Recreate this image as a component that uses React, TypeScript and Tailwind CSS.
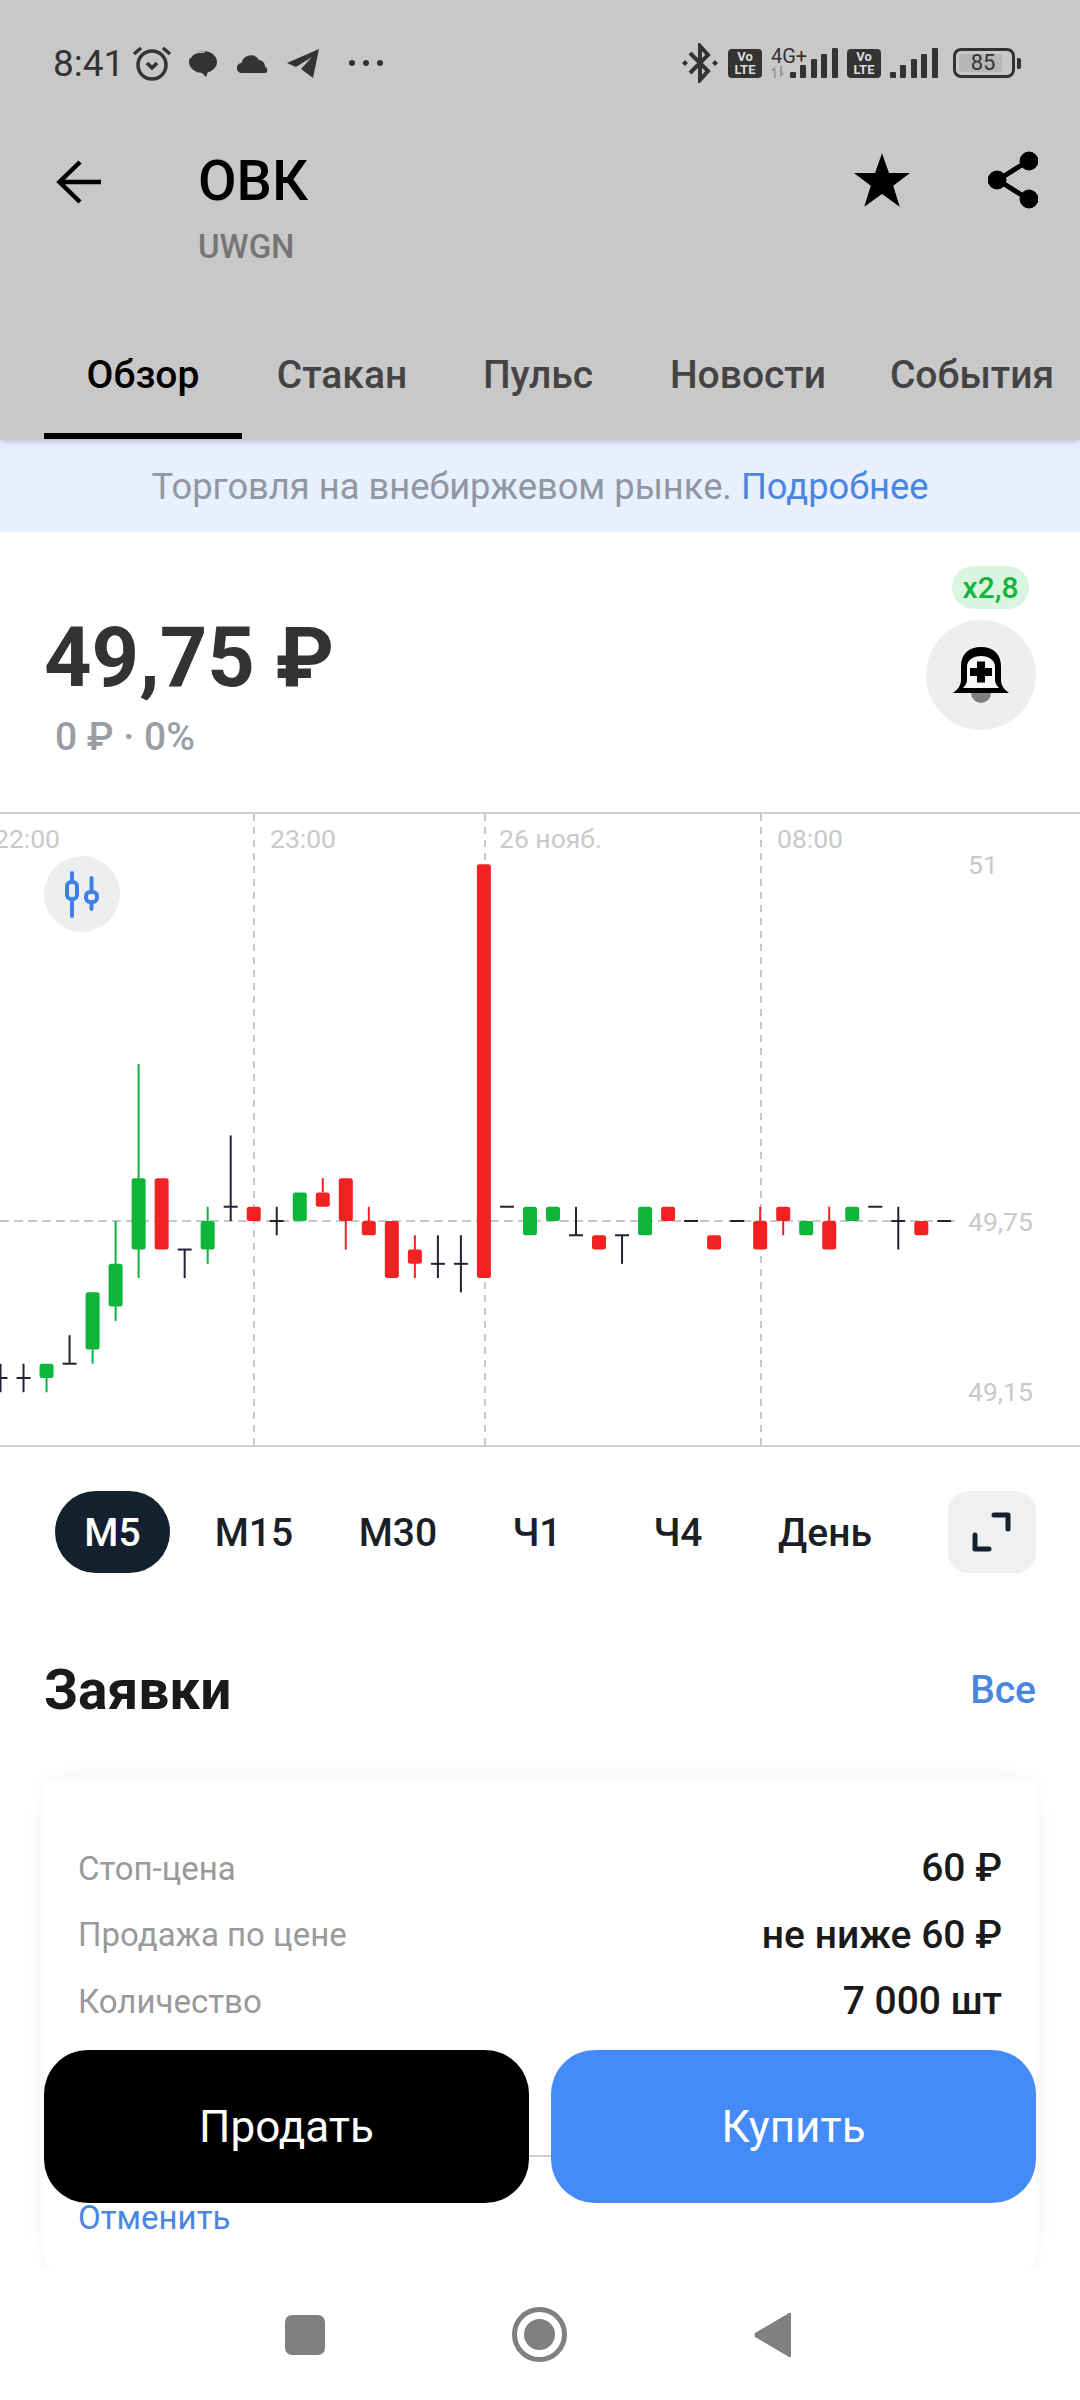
type Candle = { c: 'g' | 'r' | 'k'; t: number; b: number; h?: number; l?: number };

const candles: Candle[] = [
  { c: 'k', t: 11, b: 11, h: 10, l: 12 },
  { c: 'k', t: 11, b: 11, h: 10, l: 12 },
  { c: 'g', t: 10, b: 11, l: 12 },
  { c: 'k', t: 10, b: 10, h: 8, l: 10 },
  { c: 'g', t: 5, b: 9, l: 10 },
  { c: 'g', t: 3, b: 6, h: 0, l: 7 },
  { c: 'g', t: -3, b: 2, h: -11, l: 4 },
  { c: 'r', t: -3, b: 2 },
  { c: 'k', t: 2, b: 2, h: 2, l: 4 },
  { c: 'g', t: 0, b: 2, h: -1, l: 3 },
  { c: 'k', t: -1, b: -1, h: -6, l: 0 },
  { c: 'r', t: -1, b: 0 },
  { c: 'k', t: 0, b: 0, h: -1, l: 1 },
  { c: 'g', t: -2, b: 0 },
  { c: 'r', t: -2, b: -1, h: -3 },
  { c: 'r', t: -3, b: 0, l: 2 },
  { c: 'r', t: 0, b: 1, h: -1 },
  { c: 'r', t: 0, b: 4 },
  { c: 'r', t: 2, b: 3, h: 1, l: 4 },
  { c: 'k', t: 3, b: 3, h: 1, l: 4 },
  { c: 'k', t: 3, b: 3, h: 1, l: 5 },
  { c: 'r', t: -25, b: 4 },
  { c: 'k', t: -1, b: -1 },
  { c: 'g', t: -1, b: 1 },
  { c: 'g', t: -1, b: 0 },
  { c: 'k', t: 1, b: 1, h: -1, l: 1 },
  { c: 'r', t: 1, b: 2 },
  { c: 'k', t: 1, b: 1, h: 1, l: 3 },
  { c: 'g', t: -1, b: 1 },
  { c: 'r', t: -1, b: 0 },
  { c: 'k', t: 0, b: 0 },
  { c: 'r', t: 1, b: 2 },
  { c: 'k', t: 0, b: 0 },
  { c: 'r', t: 0, b: 2, h: -1 },
  { c: 'r', t: -1, b: 0, l: 1 },
  { c: 'g', t: 0, b: 1 },
  { c: 'r', t: 0, b: 2, h: -1 },
  { c: 'g', t: -1, b: 0 },
  { c: 'k', t: -1, b: -1 },
  { c: 'k', t: 0, b: 0, h: -1, l: 2 },
  { c: 'r', t: 0, b: 1 },
  { c: 'k', t: 0, b: 0 },
];

const colors = { g: '#0db53a', r: '#f22222', k: '#1e2430' };
const zero = 407;
const y = (n: number) => zero + n * 14.27;
const x = (i: number) => 0.5 + i * 23.02;

const tabs = [
  { label: 'Обзор', w: 'w-[198px]', active: true },
  { label: 'Стакан', w: 'w-[200px]' },
  { label: 'Пульс', w: 'w-[192px]' },
  { label: 'Новости', w: 'w-[228px]' },
  { label: 'События', w: 'w-[220px]' },
];

const periods = [
  { label: 'М5', w: 'w-[115px]', active: true },
  { label: 'М15', w: 'w-[168px]' },
  { label: 'М30', w: 'w-[120px]' },
  { label: 'Ч1', w: 'w-[158px]' },
  { label: 'Ч4', w: 'w-[124px]' },
  { label: 'День', w: 'w-[170px]' },
];

const rows = [
  { label: 'Стоп-цена', value: '60 ₽' },
  { label: 'Продажа по цене', value: 'не ниже 60 ₽' },
  { label: 'Количество', value: '7 000 шт' },
];

const Bars = () => (
  <svg width="48" height="30" viewBox="0 0 48 30" fill="#333">
    <rect x="0" y="24" width="6" height="6" rx="1" />
    <rect x="10" y="17" width="6" height="13" rx="1" />
    <rect x="21" y="11" width="6" height="19" rx="1" />
    <rect x="31" y="6" width="6" height="24" rx="1" />
    <rect x="42" y="0" width="6" height="30" rx="1" />
  </svg>
);

const VoLte = () => (
  <div className="flex h-[29px] w-[34px] flex-col items-center justify-center rounded-[4px] bg-[#333] text-[13px] leading-[13px] font-bold text-[#dcdcdc]">
    <span>Vo</span>
    <span>LTE</span>
  </div>
);

const StatusBar = () => (
  <div className="flex h-[126px] items-center justify-between pr-[59px] pl-[53px] text-[#333]">
    <div className="flex items-center">
      <span className="w-[79px] text-[37px] leading-none">8:41</span>
      <svg width="40" height="36" viewBox="0 0 40 36" fill="none" stroke="#333">
        <circle cx="20" cy="20" r="14" strokeWidth="3.5" />
        <path d="M2 9 9 3M38 9l-7-6" strokeWidth="3.5" />
        <path d="M15 18l5 5 5-5" strokeWidth="3.5" />
      </svg>
      <svg className="ml-[17px]" width="28" height="28" viewBox="0 0 28 28">
        <ellipse cx="14" cy="13" rx="14" ry="11" fill="#333" />
        <path d="M9 20h11l-3 8z" fill="#333" />
        <path d="M1 9c3-6 8-6 15-6" fill="none" stroke="#c8c8c8" strokeWidth="1.5" />
      </svg>
      <svg className="ml-[20px]" width="32" height="19" viewBox="0 0 32 19" fill="#333">
        <path d="M5 19a5 5 0 0 1-.5-10A9.500 9.500 0 0 1 22 6a6.500 6.500 0 0 1 6 6.500 4 4 0 0 1 1 6.500z" />
      </svg>
      <svg className="ml-[18px]" width="32" height="29" viewBox="0 0 32 29" fill="#333">
        <path d="M32 0 0 14l9 4 16-10-11 12 12 9z" />
      </svg>
      <div className="ml-[30px] flex gap-[8px]">
        <div className="h-[6px] w-[6px] rounded-full bg-[#333]" />
        <div className="h-[6px] w-[6px] rounded-full bg-[#333]" />
        <div className="h-[6px] w-[6px] rounded-full bg-[#333]" />
      </div>
    </div>
    <div className="flex items-center">
      <svg width="36" height="40" viewBox="0 0 36 40" fill="none" stroke="#333" strokeWidth="4">
        <path d="M8 10l18 18-8 9V3l8 9L8 30" />
        <path d="M0 20l3-3 3 3-3 3zM30 20l3-3 3 3-3 3z" fill="#333" strokeWidth="0" />
      </svg>
      <div className="ml-[10px]">
        <VoLte />
      </div>
      <div className="relative ml-[9px] h-[30px] w-[67px]">
        <span className="absolute -top-[2px] left-0 text-[20px] leading-[20px]">4G+</span>
        <svg className="absolute bottom-0 left-0" width="18" height="12" viewBox="0 0 18 12" fill="#999">
          <path d="M0 5l4-5 1 12H3V5zM9 0h2v7h2l-4 5z" />
        </svg>
        <div className="absolute right-0 bottom-0">
          <Bars />
        </div>
      </div>
      <div className="ml-[9px]">
        <VoLte />
      </div>
      <div className="ml-[9px]">
        <Bars />
      </div>
      <div className="ml-[15px] flex items-center">
        <div className="relative flex h-[30px] w-[62px] items-center justify-center rounded-[8px] border-[3px] border-[#333]">
          <div className="absolute top-[3px] bottom-[3px] left-[3px] w-[43px] rounded-[2px] bg-[#b6b6b6]" />
          <span className="relative mr-[2px] text-[22px] leading-none">85</span>
        </div>
        <div className="ml-[2px] h-[11px] w-[4px] rounded-r-[2px] bg-[#333]" />
      </div>
    </div>
  </div>
);

const Header = () => (
  <div className="relative z-10 h-[440px] bg-[#c8c8c8] shadow-[0_2px_6px_rgba(110,130,170,0.35)]">
    <StatusBar />
    <div className="mt-[25px] flex justify-between pr-[42px] pl-[54px]">
      <div className="flex">
        <svg className="mt-[9px]" width="47" height="44" viewBox="0 0 47 44" fill="none" stroke="#000" strokeWidth="4.500">
          <path d="M47 22H6M26 2 5.500 22 26 42" />
        </svg>
        <div className="ml-[97px]">
          <div className="text-[56px] leading-[60px] font-medium text-black">ОВК</div>
          <div className="mt-[16px] text-[33px] leading-[40px] font-medium text-[#757575]">UWGN</div>
        </div>
      </div>
      <div className="-mt-px flex items-start">
        <svg className="mt-[3px]" width="56" height="54" viewBox="0 0 24 23" fill="#000">
          <path d="M12 0l3 8.500h9l-7.200 5.500 2.800 9-7.600-5.500L4.400 23l2.800-9L0 8.500h9z" />
        </svg>
        <svg className="ml-[78px] mt-[1px]" width="50" height="58" viewBox="0 0 50 58" fill="none" stroke="#000">
          <path d="M40 10 10 29l30 19" strokeWidth="5" />
          <circle cx="41" cy="10" r="9" fill="#000" />
          <circle cx="9" cy="29" r="9" fill="#000" />
          <circle cx="41" cy="48" r="9" fill="#000" />
        </svg>
      </div>
    </div>
    <div className="absolute right-0 bottom-0 left-0 flex h-[130px] overflow-hidden pl-[44px]">
      {tabs.map((tab) => (
        <div
          key={tab.label}
          className={`relative flex h-full shrink-0 items-center justify-center text-[39px] font-medium ${tab.w} ${tab.active ? 'text-black' : 'text-[#444]'}`}
        >
          {tab.label}
          {tab.active && <div className="absolute right-0 bottom-px left-0 h-[6px] bg-black" />}
        </div>
      ))}
    </div>
  </div>
);

const PriceBlock = () => (
  <div className="flex h-[280px] justify-between pr-[44px] pl-[44px]">
    <div className="pt-[78px]">
      <div className="text-[83px] leading-[96px] font-bold text-[#333]">49,75 ₽</div>
      <div className="mt-[9px] ml-[11px] text-[39px] leading-[44px] font-medium text-[#9a9ea3]">0 ₽ · 0%</div>
    </div>
    <div className="flex flex-col items-end pt-[34px]">
      <div className="mr-[7px] flex h-[43px] w-[77px] items-center justify-center rounded-full bg-[#d9f5df] text-[30px] font-medium text-[#13b33f]">
        x2,8
      </div>
      <div className="mt-[11px] flex h-[110px] w-[110px] items-center justify-center rounded-full bg-[#eceef0]">
        <svg width="56" height="58" viewBox="0 0 56 58">
          <path d="M18 47a10 10 0 0 0 20 0z" fill="#808080" />
          <path d="M8 34V20C8 8 16 1 28 1s20 7 20 19v14c0 6 4 10 8 13H0c4-3 8-7 8-13z" fill="#000" />
          <path d="M14 21v13c0 3-2 6-4 8h36c-2-2-4-5-4-8V21c0-7-6-11-14-11s-14 4-14 11z" fill="#f6f7f8" />
          <path d="M24 15.500h8V22h7v8h-7v6.500h-8V30h-7v-8h7z" fill="#000" />
        </svg>
      </div>
    </div>
  </div>
);

const Chart = () => (
  <div className="relative h-[635px] border-y-2 border-[#cfcfcf] text-[26.500px] leading-[34px] text-[#c9c9c9]">
    <svg className="absolute inset-0" width="1080" height="631" viewBox="0 0 1080 631">
      {[254, 485, 761].map((gx) => (
        <line key={gx} x1={gx} x2={gx} y1="0" y2="631" stroke="#c8c8c8" strokeWidth="2" strokeDasharray="7 6" />
      ))}
      <line x1="0" x2="955" y1={zero} y2={zero} stroke="#c8c8c8" strokeWidth="2" strokeDasharray="9 5" />
      {candles.map((cd, i) => {
        const color = colors[cd.c];
        return (
          <g key={i}>
            {cd.h !== undefined && cd.l !== undefined && (
              <line x1={x(i)} x2={x(i)} y1={y(cd.h)} y2={y(cd.l)} stroke={color} strokeWidth="2" />
            )}
            {cd.h !== undefined && cd.l === undefined && (
              <line x1={x(i)} x2={x(i)} y1={y(cd.h)} y2={y(cd.t)} stroke={color} strokeWidth="2" />
            )}
            {cd.l !== undefined && cd.h === undefined && (
              <line x1={x(i)} x2={x(i)} y1={y(cd.b)} y2={y(cd.l)} stroke={color} strokeWidth="2" />
            )}
            {cd.c === 'k' ? (
              <rect x={x(i) - 7} y={y(cd.t) - 1} width="14" height="2" fill={color} />
            ) : (
              <rect x={x(i) - 7} y={y(cd.t)} width="14" height={y(cd.b) - y(cd.t)} rx="2.500" fill={color} />
            )}
          </g>
        );
      })}
    </svg>
    <span className="absolute top-[8px] -left-[6px]">22:00</span>
    <span className="absolute top-[8px] left-[270px]">23:00</span>
    <span className="absolute top-[8px] left-[499px]">26 нояб.</span>
    <span className="absolute top-[8px] left-[777px]">08:00</span>
    <span className="absolute top-[34px] left-[968px]">51</span>
    <span className="absolute top-[391px] left-[968px]">49,75</span>
    <span className="absolute top-[561px] left-[968px]">49,15</span>
    <div className="absolute top-[42px] left-[44px] flex h-[76px] w-[76px] items-center justify-center rounded-full bg-[#eceef0]">
      <svg width="40" height="48" viewBox="0 0 40 48" fill="none" stroke="#3f80e8" strokeWidth="4" strokeLinecap="round">
        <path d="M10 3v8M10 30v16M29.500 8v12M29.500 33v6" />
        <rect x="5" y="12" width="10" height="17" rx="4" />
        <rect x="24" y="22" width="11" height="10" rx="4" />
      </svg>
    </div>
  </div>
);

const Periods = () => (
  <div className="mt-[44px] flex h-[82px] items-center pr-[44px] pl-[55px]">
    {periods.map((p) => (
      <div
        key={p.label}
        className={`flex h-full shrink-0 items-center justify-center pt-[3px] text-[39px] font-medium ${p.w} ${p.active ? 'rounded-[41px] bg-[#14202e] text-white' : 'text-[#1a1f28]'}`}
      >
        {p.label}
      </div>
    ))}
    <div className="ml-auto flex h-[82px] w-[88px] items-center justify-center rounded-[20px] bg-[#eef0f2]">
      <svg width="40" height="40" viewBox="0 0 40 40" fill="none" stroke="#14202e" strokeWidth="5" strokeLinecap="round" strokeLinejoin="round">
        <path d="M22 3h14v14M3 23v14h14" />
      </svg>
    </div>
  </div>
);

const Orders = () => (
  <>
    <div className="mt-[82px] flex h-[70px] items-center justify-between px-[44px]">
      <span className="text-[55px] font-bold text-[#1a1a1a]">Заявки</span>
      <span className="text-[39px] font-medium text-[#4a86e0]">Все</span>
    </div>
    <div className="mx-[44px] mt-[54px] rounded-[16px] bg-white px-[34px] pt-[56px] pb-[30px] shadow-[0_0_24px_rgba(0,0,0,0.06)]">
      {rows.map((r) => (
        <div key={r.label} className="flex h-[66.500px] items-center justify-between">
          <span className="text-[33px] text-[#9a9a9a]">{r.label}</span>
          <span className="text-[39px] font-medium text-[#1a1a1a]">{r.value}</span>
        </div>
      ))}
      <div className="mt-[120px] h-[2px] bg-[#cfcfcf]" />
      <div className="mt-[39px] text-[33px] leading-[44px] text-[#4a86e0]">Отменить</div>
    </div>
  </>
);

export default function App() {
  return (
    <div className="relative h-[2400px] w-[1080px] overflow-hidden bg-white font-['Roboto',sans-serif]">
      <Header />
      <div className="flex h-[92px] items-center justify-center bg-[#e8f0fe] pt-[3px] text-[36.300px] text-[#9097a3]">
        <span>
          Торговля на внебиржевом рынке. <span className="text-[#4a86e0]">Подробнее</span>
        </span>
      </div>
      <PriceBlock />
      <Chart />
      <Periods />
      <Orders />

      {/* Buttons sit over the order card */}
      <div className="absolute right-[44px] bottom-[197px] left-[44px] flex gap-[22px] text-[44px] text-white">
        <div className="flex h-[153px] flex-1 items-center justify-center rounded-[44px] bg-black">Продать</div>
        <div className="flex h-[153px] flex-1 items-center justify-center rounded-[44px] bg-[#458bf7]">Купить</div>
      </div>

      <div className="absolute right-0 bottom-0 left-0 flex h-[131px] items-center justify-center gap-[187px] bg-white pr-[5px]">
        <div className="h-[40px] w-[40px] rounded-[7px] bg-[#808080]" />
        <div className="flex h-[55px] w-[55px] items-center justify-center rounded-full border-[5px] border-[#808080]">
          <div className="h-[31px] w-[31px] rounded-full bg-[#808080]" />
        </div>
        <svg width="37" height="46" viewBox="0 0 37 46" fill="#808080">
          <path d="M37 2v42q0 2-2 1L1 25q-1-2 0-4L35 1q2-1 2 1z" />
        </svg>
      </div>
    </div>
  );
}
